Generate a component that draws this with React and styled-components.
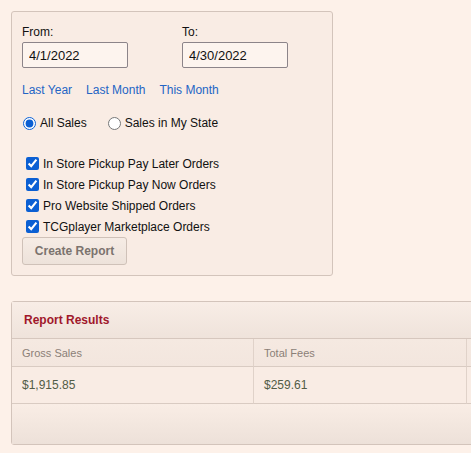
import React from "react";
import styled, { createGlobalStyle } from "styled-components";

const Global = createGlobalStyle`
  html, body { margin: 0; padding: 0; overflow: hidden; }
  body {
    background: #fdf1e9;
    font-family: "Liberation Sans", Arial, sans-serif;
    font-size: 12px;
    color: #111;
  }
`;

const Page = styled.div`
  padding: 11px 0 0 11px;
  display: flex;
  flex-direction: column;
  align-items: flex-start;
  gap: 25px;
  overflow: hidden;
`;

const FilterPanel = styled.div`
  width: 320px;
  height: 263px;
  box-sizing: content-box;
  background: #f9ece4;
  border: 1px solid #d3c4bb;
  border-radius: 3px;
  display: flex;
  flex-direction: column;
`;

const Inner = styled.div`
  padding: 13px 10px 0 10px;
  display: flex;
  flex-direction: column;
`;

const DateRow = styled.div`
  display: grid;
  grid-template-columns: 160px 106px;
`;

const Field = styled.div`
  display: flex;
  flex-direction: column;
`;

const Label = styled.label`
  font-size: 12px;
  line-height: 14px;
  margin-bottom: 3px;
  color: #111;
`;

const DateInput = styled.input`
  box-sizing: border-box;
  width: 106px;
  height: 26px;
  border: 1px solid #8c8489;
  border-radius: 2px;
  background: #fdf4ee;
  font-family: "Liberation Sans", Arial, sans-serif;
  font-size: 13px;
  color: #111;
  padding: 0 0 0 6px;
  outline: none;
`;

const Links = styled.div`
  display: flex;
  gap: 14px;
  margin-top: 15px;
  line-height: 14px;
`;

const QuickLink = styled.a`
  color: #2465c4;
  text-decoration: none;
  font-size: 12px;
  cursor: pointer;
`;

const RadioRow = styled.div`
  display: flex;
  align-items: center;
  margin-top: 19px;
  height: 14px;
`;

const RadioLabel = styled.label`
  display: flex;
  align-items: center;
  margin-right: ${(p) => p.$gap || 0}px;
  font-size: 12px;
  line-height: 14px;
`;

const Radio = styled.input.attrs({ type: "radio" })`
  width: 13px;
  height: 13px;
  margin: 0 4px 0 1px;
  accent-color: #0b5fd3;
`;

const CheckList = styled.div`
  display: flex;
  flex-direction: column;
  margin-top: 23px;
  padding-left: 4px;
`;

const CheckLabel = styled.label`
  display: flex;
  align-items: center;
  height: 21px;
  font-size: 12px;
`;

const Check = styled.input.attrs({ type: "checkbox" })`
  width: 13px;
  height: 13px;
  margin: 0 4px 0 0;
  accent-color: #0b5fd3;
`;

const Button = styled.button`
  margin-top: 0;
  width: 105px;
  height: 28px;
  box-sizing: border-box;
  border: 1px solid #cfc1b8;
  border-radius: 3px;
  background: linear-gradient(#f6ece5, #ede2da);
  color: #7b736e;
  font-family: "Liberation Sans", Arial, sans-serif;
  font-weight: bold;
  font-size: 12px;
  padding: 0;
`;

const ResultsPanel = styled.div`
  width: 700px;
  flex-shrink: 0;
  border: 1px solid #d3c4bb;
  border-radius: 3px;
  background: #f9ece4;
  display: flex;
  flex-direction: column;
`;

const ResultsHeader = styled.div`
  height: 36px;
  display: flex;
  align-items: center;
  padding-left: 12px;
  background: linear-gradient(#f8ede6, #efe3db);
  border-bottom: 1px solid #d6c7be;
`;

const Title = styled.h3`
  margin: 0;
  font-size: 12px;
  font-weight: bold;
  color: #a0172b;
`;

const Table = styled.div`
  display: grid;
  grid-template-columns: 242px 213px 1fr;
`;

const Cell = styled.div`
  box-sizing: border-box;
  height: ${(p) => (p.$head ? 28 : 37)}px;
  display: flex;
  align-items: center;
  padding-left: 10px;
  font-size: ${(p) => (p.$head ? 11 : 12)}px;
  color: ${(p) => (p.$head ? "#8b7f77" : "#525c46")};
  background: ${(p) => (p.$head ? "linear-gradient(#f5e9e1, #f3e6de)" : "#f9ece4")};
  border-bottom: 1px solid #d9cbc2;
  border-right: ${(p) => (p.$last ? "none" : "1px solid #e0d2c9")};
`;

const ResultsFooter = styled.div`
  height: 40px;
  background: linear-gradient(#f9ede5, #ede1d9);
`;

export default function App() {
  return (
    <>
      <Global />
      <Page>
        <FilterPanel>
          <Inner>
            <DateRow>
              <Field>
                <Label>From:</Label>
                <DateInput defaultValue="4/1/2022" />
              </Field>
              <Field>
                <Label>To:</Label>
                <DateInput defaultValue="4/30/2022" />
              </Field>
            </DateRow>
            <Links>
              <QuickLink>Last Year</QuickLink>
              <QuickLink>Last Month</QuickLink>
              <QuickLink>This Month</QuickLink>
            </Links>
            <RadioRow>
              <RadioLabel $gap={20}>
                <Radio name="scope" defaultChecked />
                All Sales
              </RadioLabel>
              <RadioLabel>
                <Radio name="scope" />
                Sales in My State
              </RadioLabel>
            </RadioRow>
            <CheckList>
              <CheckLabel><Check defaultChecked />In Store Pickup Pay Later Orders</CheckLabel>
              <CheckLabel><Check defaultChecked />In Store Pickup Pay Now Orders</CheckLabel>
              <CheckLabel><Check defaultChecked />Pro Website Shipped Orders</CheckLabel>
              <CheckLabel><Check defaultChecked />TCGplayer Marketplace Orders</CheckLabel>
            </CheckList>
            <Button>Create Report</Button>
          </Inner>
        </FilterPanel>
        <ResultsPanel>
          <ResultsHeader>
            <Title>Report Results</Title>
          </ResultsHeader>
          <Table>
            <Cell $head>Gross Sales</Cell>
            <Cell $head>Total Fees</Cell>
            <Cell $head $last></Cell>
            <Cell>$1,915.85</Cell>
            <Cell>$259.61</Cell>
            <Cell $last></Cell>
          </Table>
          <ResultsFooter />
        </ResultsPanel>
      </Page>
    </>
  );
}
